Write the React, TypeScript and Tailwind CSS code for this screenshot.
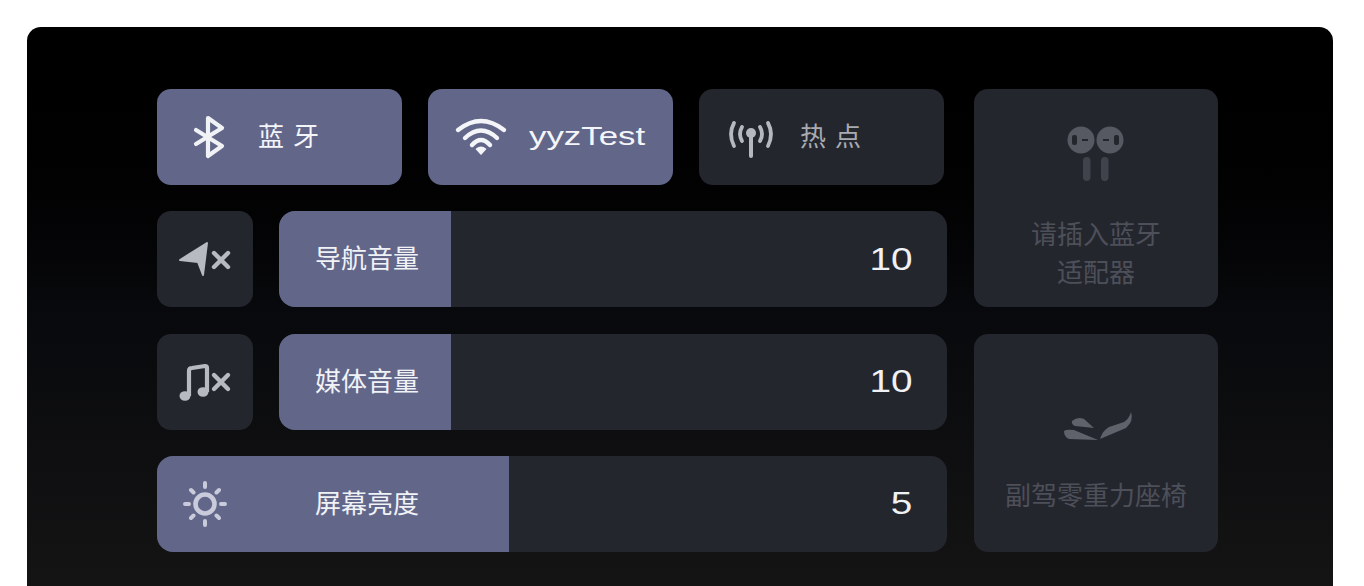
const cjk = "font-['Noto_Sans_CJK_SC','Noto_Sans',sans-serif]";

function BluetoothIcon() {
  return (
    <svg viewBox="0 0 96 96" className="h-24 w-24 shrink-0" fill="none" stroke="#f1f2f6" strokeWidth="4.2" strokeLinejoin="round" strokeLinecap="round">
      <path d="M39 41 L65 57 L51 67 L51 29 L65 39 L39 55" />
    </svg>
  );
}

function WifiIcon() {
  return (
    <svg viewBox="0 0 96 96" className="h-24 w-24 shrink-0" fill="none" stroke="#f4f5f8" strokeWidth="4.4" strokeLinecap="round">
      <path d="M30 41 Q53 23 76 41" />
      <path d="M37 49 Q53 34 69 49" />
      <path d="M44 56 Q53 46 62 56" />
      <path d="M48.5 60 Q53 56.5 57.5 60 L53 65 Z" fill="#f4f5f8" stroke="#f4f5f8" strokeWidth="1.5" strokeLinejoin="round" />
    </svg>
  );
}

function HotspotIcon() {
  return (
    <svg viewBox="0 0 96 96" className="h-24 w-24 shrink-0" fill="none" stroke="#b6b8c0" strokeWidth="3.8" strokeLinecap="round">
      <circle cx="52" cy="44" r="5" fill="#b6b8c0" stroke="none" />
      <path d="M52 46 L52 67" strokeWidth="4" />
      <path d="M43 38 Q39 45 43 52" />
      <path d="M61 38 Q65 45 61 52" />
      <path d="M35 34 Q29 45 35 57" />
      <path d="M69 34 Q75 45 69 57" />
    </svg>
  );
}

function NavMuteIcon() {
  return (
    <svg viewBox="0 0 96 96" className="h-24 w-24" fill="none">
      <path d="M23 49 L50 32 L46 64 L41 51 Z" fill="#b8bac2" stroke="#b8bac2" strokeWidth="2" strokeLinejoin="round" />
      <path d="M57 42 L71 56 M71 42 L57 56" stroke="#b8bac2" strokeWidth="4.4" strokeLinecap="round" />
    </svg>
  );
}

function MusicMuteIcon() {
  return (
    <svg viewBox="0 0 96 96" className="h-24 w-24" fill="none">
      <ellipse cx="28" cy="62" rx="5.5" ry="4.8" fill="#b8bac2" />
      <ellipse cx="46" cy="58" rx="5.5" ry="4.8" fill="#b8bac2" />
      <path d="M32 62 L32 37 Q32 34 35 34 L48 32 Q50 32 50 34 L50 58" stroke="#b8bac2" strokeWidth="4.2" strokeLinejoin="round" />
      <path d="M57 41 L71 55 M71 41 L57 55" stroke="#b8bac2" strokeWidth="4.4" strokeLinecap="round" />
    </svg>
  );
}

function SunIcon() {
  return (
    <svg viewBox="0 0 96 96" className="h-24 w-24 shrink-0" fill="none" stroke="#c9cbdb" strokeWidth="4" strokeLinecap="round">
      <circle cx="48" cy="48" r="9.5" strokeWidth="4.6" />
      <path d="M48 27 L48 31 M48 65 L48 69 M28 48 L32 48 M64 48 L68 48 M34 34 L36.5 36.5 M59.5 59.5 L62 62 M34 62 L36.5 59.5 M59.5 36.5 L62 34" />
    </svg>
  );
}

function EarbudsIcon() {
  return (
    <svg viewBox="0 0 244 125" className="h-[125px] w-full" fill="none">
      <circle cx="107" cy="51" r="13.5" fill="#565862" />
      <circle cx="136" cy="51" r="13.5" fill="#565862" />
      <rect x="98" y="46" width="5" height="10" rx="2" fill="#24262e" />
      <rect x="140" y="46" width="5" height="10" rx="2" fill="#24262e" />
      <rect x="108" y="50" width="6" height="2" fill="#24262e" />
      <rect x="129" y="50" width="6" height="2" fill="#24262e" />
      <rect x="109" y="68" width="7.5" height="24" rx="3.7" fill="#41434c" />
      <rect x="127" y="68" width="7.5" height="24" rx="3.7" fill="#41434c" />
    </svg>
  );
}

function SeatIcon() {
  return (
    <svg viewBox="0 0 244 141" className="h-[141px] w-full" fill="#5f616b">
      <path d="M98 87 Q104 82 110 85 L120 94 L101 92 Q97 90 98 87 Z" />
      <path d="M90 97 Q92 95 100 96 L124 106 L95 105 Q90 103 90 97 Z" />
      <path d="M126 105 Q129 96 135 93 L150 88 Q155 85 157 78 Q160 87 152 94 Z" />
    </svg>
  );
}

function ToggleTile({ active, icon, children }: { active?: boolean; icon: React.ReactNode; children: React.ReactNode }) {
  return (
    <div className={`flex h-24 w-[245px] items-center rounded-[14px] ${active ? "bg-[#62678a] text-[#f4f5f8]" : "bg-[#24262e] text-[#a9abb3]"}`}>
      {icon}
      <div className="ml-[5px]">{children}</div>
    </div>
  );
}

function Value({ children }: { children: React.ReactNode }) {
  return (
    <span className="origin-right scale-x-[1.25] font-['Liberation_Sans',sans-serif] text-[31px] leading-none text-[#f0f1f5]">
      {children}
    </span>
  );
}

function SliderBar({ label, value }: { label: string; value: string }) {
  return (
    <div className="flex h-24 w-[668px] overflow-hidden rounded-[16px] bg-[#24262e]">
      <div className={`flex w-[172px] items-center bg-[#62678a] pl-[36px] text-[26px] leading-none text-[#f1f2f6] ${cjk}`}>
        <span className="pb-[4px]">{label}</span>
      </div>
      <div className="flex flex-1 items-center justify-end pr-[35px]">
        <Value>{value}</Value>
      </div>
    </div>
  );
}

function IconTile({ children }: { children: React.ReactNode }) {
  return <div className="h-24 w-24 rounded-[14px] bg-[#24262e]">{children}</div>;
}

export default function App() {
  return (
    <div className="h-[586px] w-[1364px] overflow-hidden bg-white pl-[27px] pr-[31px] pt-[27px]">
      <div className="flex h-[559px] gap-[27px] rounded-t-[14px] bg-gradient-to-b from-[#000000] via-[#08090c] to-[#141414] pl-[130px] pt-[62px]">
        <div className="flex w-[790px] flex-col gap-[26.33px]">
          <div className="flex gap-[26px]">
            <ToggleTile active icon={<BluetoothIcon />}>
              <span className={`text-[26px] leading-none tracking-[9px] ${cjk}`}>蓝牙</span>
            </ToggleTile>
            <ToggleTile active icon={<WifiIcon />}>
              <span className="inline-block origin-left scale-x-[1.34] font-['Liberation_Sans',sans-serif] text-[26px] leading-none">yyzTest</span>
            </ToggleTile>
            <ToggleTile icon={<HotspotIcon />}>
              <span className={`text-[26px] leading-none tracking-[9px] ${cjk}`}>热点</span>
            </ToggleTile>
          </div>
          <div className="flex gap-[26px]">
            <IconTile><NavMuteIcon /></IconTile>
            <SliderBar label="导航音量" value="10" />
          </div>
          <div className="flex gap-[26px]">
            <IconTile><MusicMuteIcon /></IconTile>
            <SliderBar label="媒体音量" value="10" />
          </div>
          <div className="flex h-24 overflow-hidden rounded-[16px] bg-[#24262e]">
            <div className={`flex w-[352px] items-center bg-[#62678a] text-[26px] leading-none text-[#f1f2f6] ${cjk}`}>
              <SunIcon />
              <span className="ml-[62px] pb-[4px]">屏幕亮度</span>
            </div>
            <div className="flex flex-1 items-center justify-end pr-[35px]">
              <Value>5</Value>
            </div>
          </div>
        </div>
        <div className="flex w-[244px] flex-col gap-[27px]">
          <div className={`h-[218px] rounded-[14px] bg-[#24262e] text-center text-[26px] leading-[38px] text-[#4d4f59] ${cjk}`}>
            <EarbudsIcon />
            <p>请插入蓝牙</p>
            <p>适配器</p>
          </div>
          <div className={`h-[218px] rounded-[14px] bg-[#24262e] text-center text-[26px] leading-[38px] text-[#4d4f59] ${cjk}`}>
            <SeatIcon />
            <p>副驾零重力座椅</p>
          </div>
        </div>
      </div>
    </div>
  );
}
